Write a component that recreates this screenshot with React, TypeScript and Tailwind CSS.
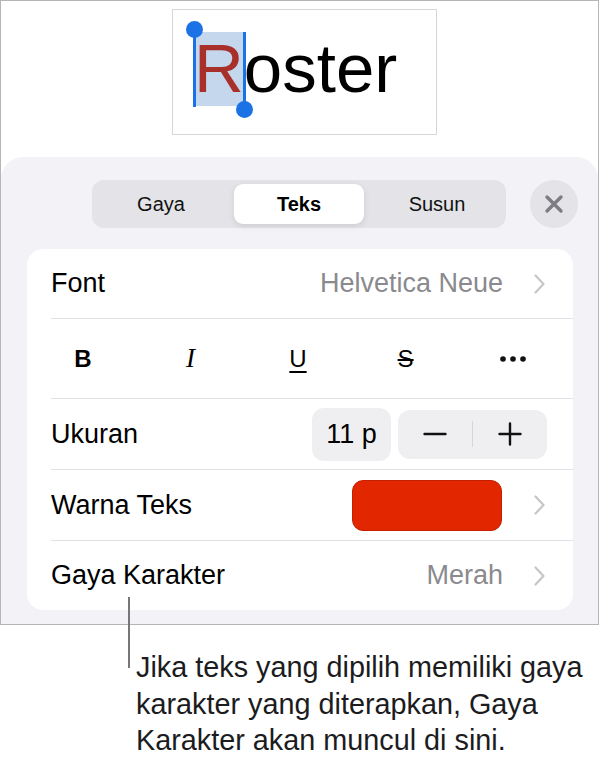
import React from "react";

function Chevron() {
  return (
    <svg width="13" height="22" viewBox="0 0 13 22" className="shrink-0">
      <path d="M2.5 2.5 L10.5 11 L2.5 19.5" fill="none" stroke="#c6c6ca" strokeWidth="2.2" strokeLinecap="round" strokeLinejoin="round" />
    </svg>
  );
}

function Divider() {
  return <div className="h-px bg-[#e1e1e5] ml-[24px]" />;
}

export default function App() {
  return (
    <div className="relative w-[599px] h-[761px] bg-white font-['Liberation_Sans',Arial,sans-serif] text-black">
      <div className="w-[599px] h-[625px] border border-[#b5b5b5] flex flex-col bg-white">
        {/* canvas */}
        <div className="h-[156px] shrink-0">
          <div className="ml-[171px] mt-[8px] w-[265px] h-[126px] border-[1.5px] border-[#d7d7d7] pl-[21px] pt-[22px]">
            <div className="relative text-[69px] leading-[74px] whitespace-nowrap">
              <span className="relative inline-block bg-[#c4d7ed] text-[#a8302b]">
                R
                <span className="absolute left-[-1px] top-[4px] w-[3px] h-[71px] bg-[#1b72e6]" />
                <span className="absolute left-[-8px] top-[-11px] w-[17px] h-[17px] rounded-full bg-[#1b72e6]" />
                <span className="absolute right-[-2px] top-0 w-[3px] h-[72px] bg-[#1b72e6]" />
                <span className="absolute right-[-9px] top-[69px] w-[17px] h-[17px] rounded-full bg-[#1b72e6]" />
              </span>
              oster
            </div>
          </div>
        </div>

        {/* sheet */}
        <div className="flex-1 bg-[#f2f2f7] rounded-t-[22px] pt-[23px] flex flex-col">
          <div className="flex items-center pl-[91px] gap-[24px]">
            <div className="w-[414px] h-[48px] rounded-[12px] bg-[#e3e3e8] p-[4px] flex justify-between">
              <div className="w-[130px] flex items-center justify-center text-[20px] text-[#111]">Gaya</div>
              <div className="w-[130px] flex items-center justify-center rounded-[9px] bg-white shadow-[0_2px_6px_rgba(0,0,0,0.1)] text-[20px] font-bold">Teks</div>
              <div className="w-[130px] flex items-center justify-center text-[20px] text-[#111]">Susun</div>
            </div>
            <div className="w-[48px] h-[48px] rounded-full bg-[#e3e3e8] flex items-center justify-center">
              <svg width="20" height="20" viewBox="0 0 20 20">
                <path d="M3 3 L17 17 M17 3 L3 17" stroke="#7d7d82" strokeWidth="3.4" strokeLinecap="round" />
              </svg>
            </div>
          </div>

          <div className="mt-[21px] ml-[26px] w-[546px] bg-white rounded-[16px] flex flex-col text-[27px]">
            <div className="h-[69px] flex items-center pl-[24px] pr-[27px]">
              <span className="flex-1">Font</span>
              <span className="text-[#8a8a8e] mr-[30px]">Helvetica Neue</span>
              <Chevron />
            </div>
            <Divider />
            <div className="h-[79px] grid grid-cols-5 items-center pl-[2px] pr-[6px]">
              <div className="flex justify-center"><span className="font-bold text-[24px]">B</span></div>
              <div className="flex justify-center"><span className="font-['Liberation_Serif',serif] italic text-[27px]">I</span></div>
              <div className="flex justify-center"><span className="text-[24px] underline decoration-[2px] underline-offset-[4px]">U</span></div>
              <div className="flex justify-center"><span className="text-[24px] line-through decoration-[2px]">S</span></div>
              <div className="flex justify-center">
                <svg width="26" height="6" viewBox="0 0 26 6">
                  <circle cx="3" cy="3" r="2.8" fill="#111" />
                  <circle cx="13" cy="3" r="2.8" fill="#111" />
                  <circle cx="23" cy="3" r="2.8" fill="#111" />
                </svg>
              </div>
            </div>
            <Divider />
            <div className="h-[70px] flex items-center pl-[24px] pr-[26px]">
              <span className="flex-1">Ukuran</span>
              <div className="w-[79px] h-[53px] rounded-[12px] bg-[#efeff1] flex items-center justify-center">11 p</div>
              <div className="ml-[7px] w-[149px] h-[49px] rounded-[12px] bg-[#efeff1] flex items-center">
                <div className="flex-1 flex justify-center">
                  <svg width="24" height="24" viewBox="0 0 24 24"><path d="M1.5 12 H22.5" stroke="#111" strokeWidth="2.4" strokeLinecap="round" /></svg>
                </div>
                <div className="w-px h-[26px] bg-[#d6d6da]" />
                <div className="flex-1 flex justify-center">
                  <svg width="24" height="24" viewBox="0 0 24 24"><path d="M1.5 12 H22.5 M12 1.5 V22.5" stroke="#111" strokeWidth="2.4" strokeLinecap="round" /></svg>
                </div>
              </div>
            </div>
            <Divider />
            <div className="h-[70px] flex items-center pl-[24px] pr-[27px]">
              <span className="flex-1">Warna Teks</span>
              <div className="w-[150px] h-[51px] rounded-[11px] bg-[#e12600] border border-[#c42000] mr-[31px]" />
              <Chevron />
            </div>
            <Divider />
            <div className="h-[69px] flex items-center pl-[24px] pr-[27px]">
              <span className="flex-1">Gaya Karakter</span>
              <span className="text-[#8a8a8e] mr-[30px]">Merah</span>
              <Chevron />
            </div>
          </div>
        </div>
      </div>

      {/* callout */}
      <div className="absolute left-[128px] top-[597px] w-[2px] h-[71px] bg-[#777]" />
      <div className="pl-[136px] pt-[24px] text-[28.8px] leading-[36.5px] text-[#1c1c1e]">
        Jika teks yang dipilih memiliki gaya
        <br />
        karakter yang diterapkan, Gaya
        <br />
        Karakter akan muncul di sini.
      </div>
    </div>
  );
}
